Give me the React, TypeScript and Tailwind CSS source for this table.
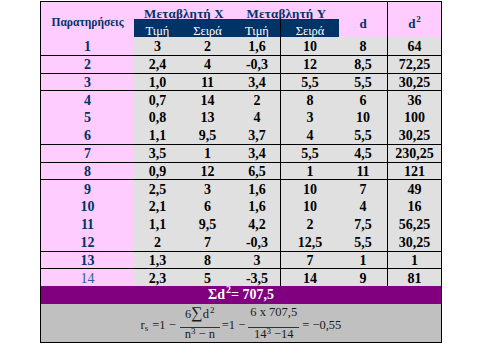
import React from 'react';

type Row = { n: number; vals: string[]; line: boolean };

const data: [string, string, string, string, string, string][] = [
  ['3', '2', '1,6', '10', '8', '64'],
  ['2,4', '4', '-0,3', '12', '8,5', '72,25'],
  ['1,0', '11', '3,4', '5,5', '5,5', '30,25'],
  ['0,7', '14', '2', '8', '6', '36'],
  ['0,8', '13', '4', '3', '10', '100'],
  ['1,1', '9,5', '3,7', '4', '5,5', '30,25'],
  ['3,5', '1', '3,4', '5,5', '4,5', '230,25'],
  ['0,9', '12', '6,5', '1', '11', '121'],
  ['2,5', '3', '1,6', '10', '7', '49'],
  ['2,1', '6', '1,6', '10', '4', '16'],
  ['1,1', '9,5', '4,2', '2', '7,5', '56,25'],
  ['2', '7', '-0,3', '12,5', '5,5', '30,25'],
  ['1,3', '8', '3', '7', '1', '1'],
  ['2,3', '5', '-3,5', '14', '9', '81'],
];

const lineAbove = [2, 3, 4, 7, 8, 9, 13, 14];

const rows: Row[] = data.map((vals, i) => ({ n: i + 1, vals, line: lineAbove.includes(i + 1) }));

// fraction: numerator baseline 10px above the bar, denominator right below it
const Frac = ({ top, bottom, w }: { top: React.ReactNode; bottom: React.ReactNode; w: string }) => (
  <span className={`flex flex-col items-center ${w}`}>
    <span className="h-[13px] leading-[13px] whitespace-nowrap">{top}</span>
    <span className="w-full h-px bg-[#333] mt-[8px]" />
    <span className="h-[13px] leading-[13px] whitespace-nowrap">{bottom}</span>
  </span>
);

export default function App() {
  return (
    <div
      className="w-[480px] h-[361px] bg-white pt-px pl-[40px]"
      style={{ fontFamily: '"Liberation Serif", "DejaVu Serif", serif' }}
    >
      <div className="w-[402px] border border-black">
        {/* header */}
        <div className="flex h-[35px]">
          <div className="w-[93px] bg-[#ffccff] flex justify-center pt-[15px] text-[11.5px] font-bold text-[#003366] leading-none">
            Παρατηρήσεις
          </div>
          <div className="w-[205px] flex flex-col">
            <div className="h-[17px] bg-[#ffccff] flex text-[13px] font-bold text-[#003366] leading-none tracking-[0.2px]">
              <div className="w-[100px] flex justify-center pt-[5px]">Μεταβλητή X</div>
              <div className="w-[105px] flex justify-center pt-[5px]">Μεταβλητή Y</div>
            </div>
            <div className="h-[18px] bg-[#003366] flex text-[12.5px] text-white leading-none">
              <div className="w-[47px] flex justify-center pt-[6px]">Τιμή</div>
              <div className="w-[53px] flex justify-center pt-[6px]">Σειρά</div>
              <div className="w-[46px] flex justify-center pt-[6px]">Τιμή</div>
              <div className="w-[59px] border-l border-black flex justify-center pt-[6px]">Σειρά</div>
            </div>
          </div>
          <div className="w-[48px] bg-[#ffccff] flex justify-center pt-[15px] text-[13px] font-bold text-[#003366] leading-none">
            d
          </div>
          <div className="w-[54px] bg-[#ffccff] border-l border-black flex justify-center pt-[15px] text-[13px] font-bold text-[#003366] leading-none">
            <span>
              d<sup className="text-[9px] -top-[6px] ml-px">2</sup>
            </span>
          </div>
        </div>

        {/* body */}
        {rows.map((r) => (
          <div
            key={r.n}
            className={`flex h-[17.8px] text-[14px] leading-none font-bold ${r.line ? 'border-t border-black' : ''}`}
          >
            <div
              className={`w-[93px] bg-[#ffccff] flex items-center justify-center pt-[2px] ${
                r.n === 14 ? 'font-normal text-[#2d5a9a]' : 'text-[#003366]'
              }`}
            >
              {r.n}
            </div>
            <div className="w-[47px] bg-[#e0e0e0] flex items-center justify-center pt-[2px]">{r.vals[0]}</div>
            <div className="w-[53px] bg-[#e0e0e0] flex items-center justify-center pt-[2px]">{r.vals[1]}</div>
            <div className="w-[46px] bg-[#e0e0e0] flex items-center justify-center pt-[2px]">{r.vals[2]}</div>
            <div className="w-[59px] bg-[#e0e0e0] border-l border-black flex items-center justify-center pt-[2px]">{r.vals[3]}</div>
            <div className="w-[48px] bg-[#e0e0e0] flex items-center justify-center pt-[2px]">{r.vals[4]}</div>
            <div className="w-[54px] bg-[#e0e0e0] border-l border-black flex items-center justify-center pt-[2px]">{r.vals[5]}</div>
          </div>
        ))}

        {/* sum */}
        <div className="h-[18px] bg-[#800080] flex items-center justify-center text-white font-bold text-[14px] leading-none">
          <span>
            Σd<sup className="text-[10px] -top-[6px] ml-px">2</sup>= 707,5
          </span>
        </div>

        {/* formula */}
        <div className="h-[38px] bg-[#c0c0c0] flex justify-center pt-[2px] text-[12.5px] text-[#1a1a1a]">
          <div className="flex items-start">
            <span className="mt-[13px] leading-[13px] whitespace-nowrap">
              r<sub className="text-[9px] -bottom-[2px]">s</sub>
            </span>
            <span className="mt-[13px] leading-[13px] ml-[4px] whitespace-nowrap">=1 −</span>
            <Frac
              w="w-[40px] ml-[4px]"
              top={
                <>
                  6<span className="text-[16px]">∑</span>d<sup className="text-[9px] -top-[5px] ml-px">2</sup>
                </>
              }
              bottom={
                <>
                  n<sup className="text-[9px] -top-[4px]">3</sup> − n
                </>
              }
            />
            <span className="mt-[13px] leading-[13px] ml-[2px] whitespace-nowrap">=1 −</span>
            <Frac
              w="w-[51px] ml-[3px]"
              top={<>6 x 707,5</>}
              bottom={
                <>
                  14<sup className="text-[9px] -top-[4px]">3</sup> −14
                </>
              }
            />
            <span className="mt-[13px] leading-[13px] ml-[3px] whitespace-nowrap">= −0,55</span>
          </div>
        </div>
      </div>
    </div>
  );
}
